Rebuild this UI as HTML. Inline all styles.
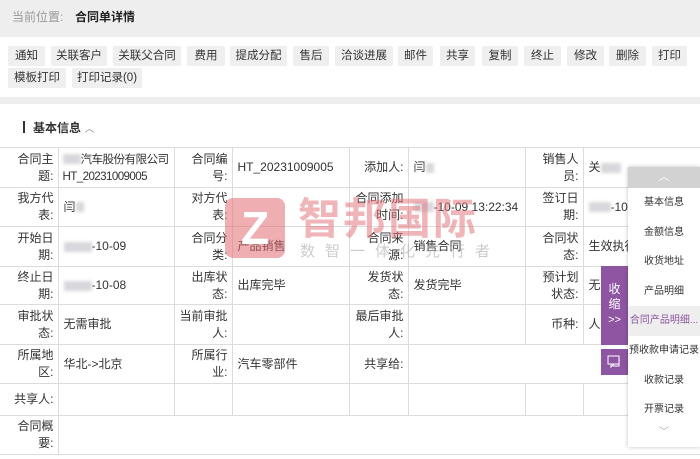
<!DOCTYPE html>
<html><head><meta charset="utf-8"><style>
*{margin:0;padding:0;box-sizing:border-box}
body{width:700px;height:459px;overflow:hidden;background:#fff;font-family:"Liberation Sans","Noto Sans CJK SC",sans-serif;font-size:12px;color:#333;position:relative}
.hdr{position:absolute;left:0;top:0;width:700px;height:37px;background:#eeeeee}
.hdr span{position:absolute;top:8px;font-size:12px}
.btn{position:absolute;height:20px;background:#efefef;border-radius:2px;font-size:11.5px;line-height:20px;text-align:center;color:#333;white-space:nowrap}
.strip{position:absolute;left:0;top:97px;width:700px;height:7px;background:#eeeeee}
.sec{position:absolute;left:23px;top:119px;font-weight:bold;font-size:12px}
table{position:absolute;left:0;top:147px;border-collapse:collapse;table-layout:fixed;width:700px}
td{border:1px solid #dcdcdc;font-size:12px;line-height:17px;vertical-align:middle;padding:0 3px 0 5px;word-break:break-all;overflow:hidden}
td.l{text-align:right;padding:0 4px 0 16px}
td.l5{padding-left:3px}
td:first-child{border-left:none}
.nw{white-space:nowrap}
.blur{display:inline-block;background:#d8d8dc;height:10px;vertical-align:middle;filter:blur(1.5px)}
.wm{position:absolute;pointer-events:none}
.panel{position:absolute;left:628px;top:167px;width:72px;height:280px;background:#fff;box-shadow:0 0 4px rgba(0,0,0,.25)}
.panel .top{height:21px;background:#d2d2d2;text-align:center;color:#fff;font-size:11px;line-height:21px}
.panel .it{height:29.6px;line-height:29.6px;text-align:center;font-size:10px;color:#333;white-space:nowrap;overflow:hidden}
</style></head><body>
<div class="hdr"><span style="left:12px;color:#999">当前位置:</span><span style="left:75px;font-weight:bold;color:#222">合同单详情</span></div>
<div class="btn" style="left:8px;top:46px;width:37px">通知</div>
<div class="btn" style="left:51px;top:46px;width:56px">关联客户</div>
<div class="btn" style="left:113px;top:46px;width:68px">关联父合同</div>
<div class="btn" style="left:187px;top:46px;width:38px">费用</div>
<div class="btn" style="left:230px;top:46px;width:57px">提成分配</div>
<div class="btn" style="left:293px;top:46px;width:36px">售后</div>
<div class="btn" style="left:335px;top:46px;width:58px">洽谈进展</div>
<div class="btn" style="left:398px;top:46px;width:35px">邮件</div>
<div class="btn" style="left:440px;top:46px;width:35px">共享</div>
<div class="btn" style="left:482px;top:46px;width:36px">复制</div>
<div class="btn" style="left:524px;top:46px;width:37px">终止</div>
<div class="btn" style="left:567px;top:46px;width:37px">修改</div>
<div class="btn" style="left:609px;top:46px;width:37px">删除</div>
<div class="btn" style="left:652px;top:46px;width:35px">打印</div>
<div class="btn" style="left:8px;top:68px;width:58px">模板打印</div>
<div class="btn" style="left:72px;top:68px;width:70px">打印记录(0)</div>
<div class="strip"></div>
<div class="sec"><span style="display:inline-block;width:2px;height:12px;background:#333;vertical-align:-1px;margin-right:8px"></span>基本信息 <span style="font-weight:normal;color:#888;font-size:10px">︿</span></div>
<table>
<colgroup><col style="width:58px"><col style="width:116px"><col style="width:58px"><col style="width:117px"><col style="width:59px"><col style="width:117px"><col style="width:58px"><col style="width:117px"></colgroup>
<tr style="height:40px"><td class="l">合同主题:</td><td style="letter-spacing:-0.6px;font-size:11.6px;padding-left:4px;padding-right:0"><span class="blur" style="width:18px"></span>汽车股份有限公司HT_20231009005</td><td class="l">合同编号:</td><td>HT_20231009005</td><td class="l l5">添加人:</td><td>闫<span class="blur" style="width:8px"></span></td><td class="l">销售人员:</td><td>关<span class="blur" style="width:20px"></span></td></tr>
<tr style="height:39px"><td class="l">我方代表:</td><td>闫<span class="blur" style="width:8px"></span></td><td class="l">对方代表:</td><td></td><td class="l l5">合同添加时间:</td><td class="nw"><span class="blur" style="width:20px"></span>-10-09 13:22:34</td><td class="l">签订日期:</td><td class="nw"><span class="blur" style="width:22px"></span>-10</td></tr>
<tr style="height:40px"><td class="l">开始日期:</td><td><span class="blur" style="width:28px"></span>-10-09</td><td class="l">合同分类:</td><td>产品销售</td><td class="l l5">合同来源:</td><td>销售合同</td><td class="l">合同状态:</td><td class="nw">生效执行</td></tr>
<tr style="height:38px"><td class="l">终止日期:</td><td><span class="blur" style="width:28px"></span>-10-08</td><td class="l">出库状态:</td><td>出库完毕</td><td class="l" style="padding-left:14px">发货状态:</td><td>发货完毕</td><td class="l" style="padding-left:6px">预计划状态:</td><td>无需</td></tr>
<tr style="height:40px"><td class="l">审批状态:</td><td>无需审批</td><td class="l" style="padding-left:4px">当前审批人:</td><td></td><td class="l l5">最后审批人:</td><td></td><td class="l">币种:</td><td>人民</td></tr>
<tr style="height:39px"><td class="l">所属地区:</td><td>华北->北京</td><td class="l">所属行业:</td><td>汽车零部件</td><td class="l l5">共享给:</td><td colspan="3"></td></tr>
<tr style="height:32px"><td class="l" style="padding-left:2px">共享人:</td><td></td><td></td><td></td><td></td><td></td><td></td><td></td></tr>
<tr style="height:39px"><td class="l">合同概要:</td><td colspan="7"></td></tr>
</table>
<div class="wm" style="left:225px;top:198px;width:60px;height:60px;background:rgba(226,110,115,.55);border-radius:8px"><div style="position:absolute;left:11px;top:12px;width:38px;height:36px;color:#fff;font:bold 46px/36px 'Liberation Sans',sans-serif;text-align:center">Z</div></div>
<div class="wm" style="left:298px;top:192px;font-size:43px;line-height:48px;color:rgba(228,120,125,.55);font-weight:bold;letter-spacing:2px;font-family:'Noto Sans CJK SC',sans-serif">智邦国际</div>
<div class="wm" style="left:300px;top:242px;font-size:15px;line-height:18px;color:rgba(170,170,170,.6);letter-spacing:10px;font-family:'Noto Sans CJK SC',sans-serif">数智一体化先行者</div>
<div style="position:absolute;left:601px;top:266px;width:27px;height:79px;background:#8e55a3;color:#fff;font-size:12px;text-align:center;line-height:15px;padding-top:16px">收<br>缩<br><span style="font-size:11px">&gt;&gt;</span></div>
<div style="position:absolute;left:601px;top:349px;width:27px;height:26px;background:#8e55a3"><svg width="27" height="26" viewBox="0 0 27 26"><rect x="7" y="7" width="11" height="8" fill="none" stroke="#fff" stroke-width="1"/><path d="M10 15v3l3-3M12 17h6v-6h1" fill="none" stroke="#fff" stroke-width="1"/></svg></div>
<div class="panel"><div class="top">︿</div>
<div class="it">基本信息</div><div class="it">金额信息</div><div class="it">收货地址</div><div class="it">产品明细</div><div class="it" style="background:#eeeeee;color:#8e55a3">合同产品明细...</div><div class="it">预收款申请记录</div><div class="it">收款记录</div><div class="it">开票记录</div><div class="it" style="color:#aaa;height:20px;line-height:16px">﹀</div></div>
</body></html>
